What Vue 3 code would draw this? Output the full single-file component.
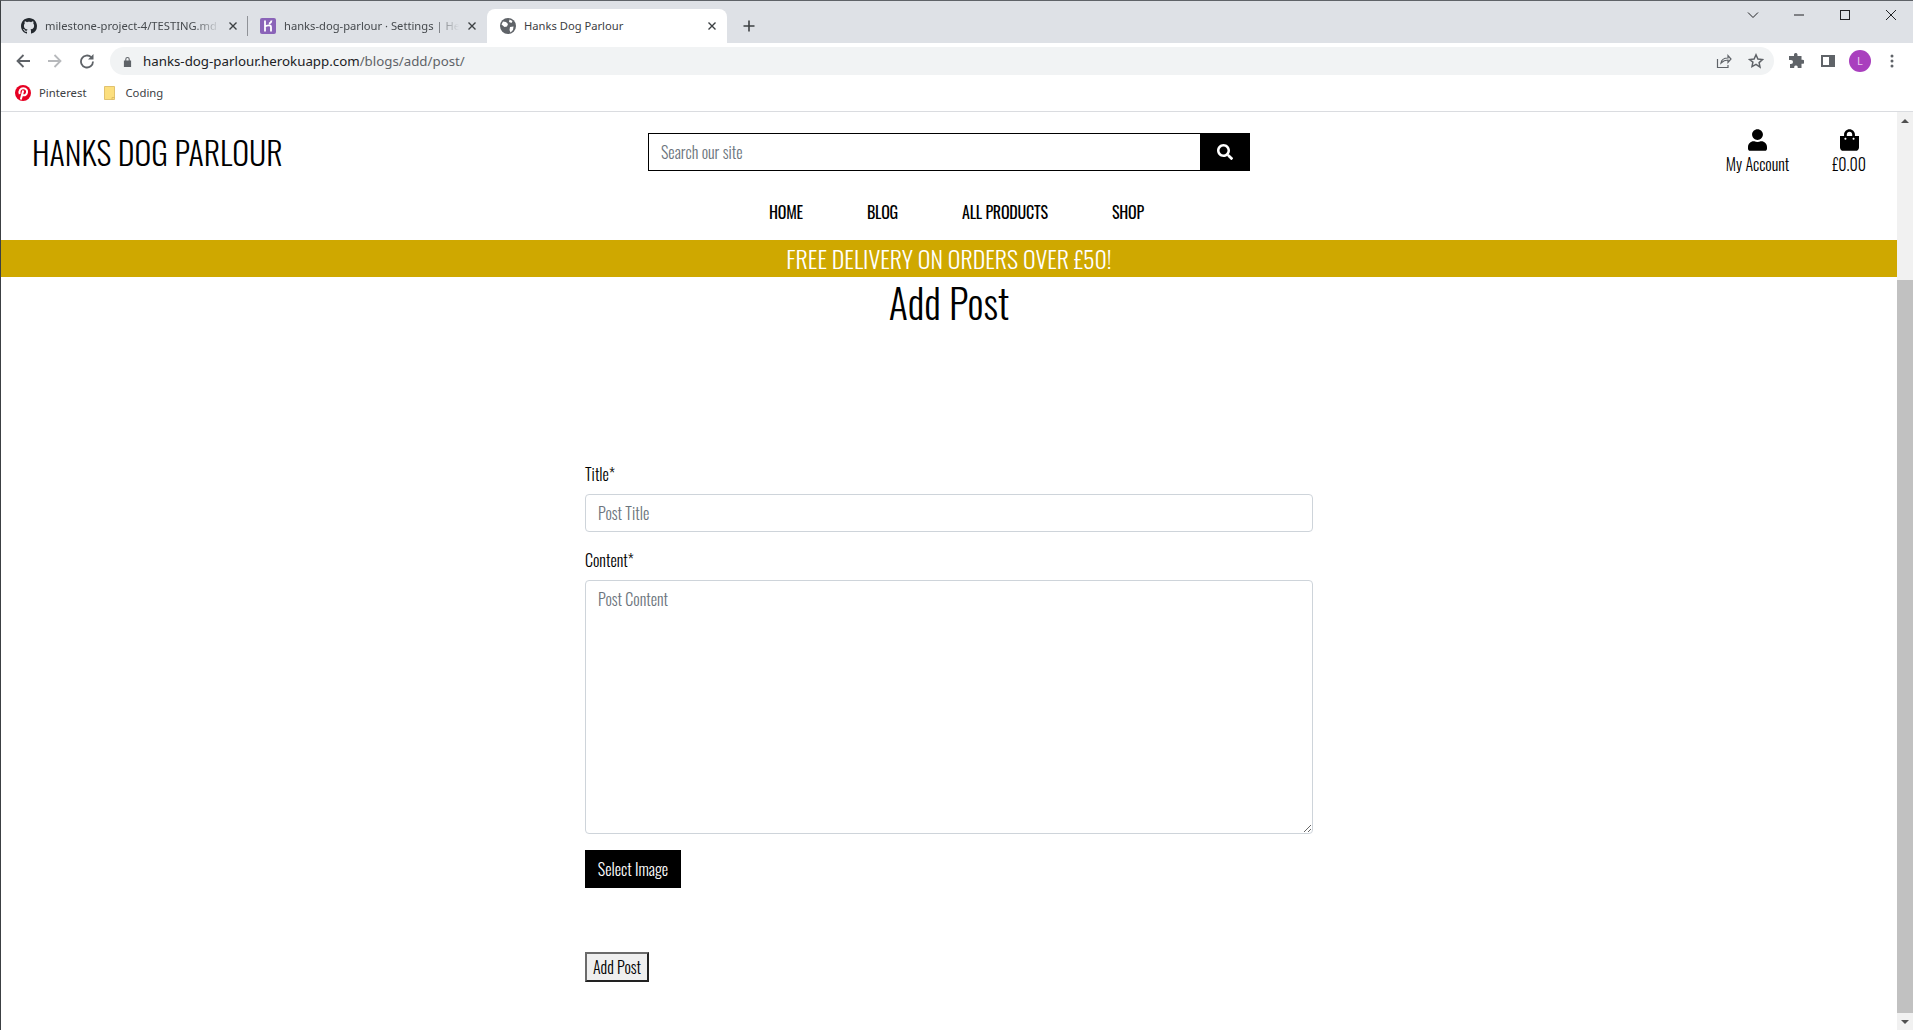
<script setup>
const navLinks = ["Home", "Blog", "All Products", "Shop"]
</script>

<template>
  <div class="window">
    <div class="tabstrip">
      <div class="tab">
        <svg class="favicon" viewBox="0 0 16 16"><path fill="#24292f" d="M8 0C3.58 0 0 3.58 0 8c0 3.54 2.29 6.53 5.47 7.59.4.07.55-.17.55-.38 0-.19-.01-.82-.01-1.49-2.01.37-2.53-.49-2.69-.94-.09-.23-.48-.94-.82-1.13-.28-.15-.68-.52-.01-.53.63-.01 1.08.58 1.23.82.72 1.21 1.87.87 2.33.66.07-.52.28-.87.51-1.07-1.78-.2-3.64-.89-3.64-3.95 0-.87.31-1.59.82-2.15-.08-.2-.36-1.02.08-2.12 0 0 .67-.21 2.2.82.64-.18 1.32-.27 2-.27.68 0 1.36.09 2 .27 1.53-1.04 2.2-.82 2.2-.82.44 1.1.16 1.92.08 2.12.51.56.82 1.27.82 2.15 0 3.07-1.87 3.75-3.65 3.95.29.25.54.73.54 1.48 0 1.07-.01 1.93-.01 2.2 0 .21.15.46.55.38A8.013 8.013 0 0016 8c0-4.42-3.58-8-8-8z"/></svg>
        <span class="tab-title fade">milestone-project-4/TESTING.md</span>
        <svg class="tab-close" viewBox="0 0 10 10"><path d="M1.5 1.5l7 7M8.5 1.5l-7 7"/></svg>
      </div>
      <div class="tab-sep"></div>
      <div class="tab">
        <svg class="favicon" viewBox="0 0 16 16"><rect width="16" height="16" rx="2" fill="#8a63b8"/><path fill="none" stroke="#fff" stroke-width="1.8" d="M5 2.500v11M5 8.500c1.500-1 6-2.200 6 .5v4.500M11.500 2.500c0 1.500-1 2.500-2.500 3.200"/></svg>
        <span class="tab-title fade">hanks-dog-parlour · Settings | Heroku</span>
        <svg class="tab-close" viewBox="0 0 10 10"><path d="M1.5 1.5l7 7M8.5 1.5l-7 7"/></svg>
      </div>
      <div class="tab active">
        <svg class="favicon" viewBox="0 0 16 16"><circle cx="8" cy="8" r="8" fill="#5f6368"/><path fill="#fff" d="M3 3.500l3 .5 2 2-1 2.500-2.500.5L1.500 6.500zM9.500 1.500l3 1.500-1 2-2.500-1zM10 9l3.500-.5L13 12l-2.500 2.500L9.500 12z"/></svg>
        <span class="tab-title">Hanks Dog Parlour</span>
        <svg class="tab-close" viewBox="0 0 10 10"><path d="M1.5 1.5l7 7M8.5 1.5l-7 7"/></svg>
      </div>
      <svg class="new-tab" viewBox="0 0 12 12"><path d="M6 .5v11M.5 6h11"/></svg>
      <div class="window-controls">
        <svg viewBox="0 0 12 12"><path d="M1 3.500l5 5 5-5"/></svg>
        <svg viewBox="0 0 12 12"><path d="M1 6h10"/></svg>
        <svg viewBox="0 0 12 12"><rect x="1.500" y="1.500" width="9" height="9"/></svg>
        <svg viewBox="0 0 12 12"><path d="M1 1l10 10M11 1L1 11"/></svg>
      </div>
    </div>

    <div class="toolbar">
      <svg class="tool" viewBox="0 0 16 16"><path d="M15 8H2.500M8.500 2L2.500 8l6 6"/></svg>
      <svg class="tool dim" viewBox="0 0 16 16"><path d="M1 8h12.500M7.500 2l6 6-6 6"/></svg>
      <svg class="tool" viewBox="0 0 16 16"><path d="M14 8.500a6 6 0 1 1-1.800-4.300"/><path class="fill" d="M14.500 1v5.500H9z"/></svg>
      <div class="omnibox">
        <svg class="lock" viewBox="0 0 10 12"><path fill="#5f6368" d="M1 5h8v7H1zM2.500 5V3.500a2.500 2.500 0 0 1 5 0V5H6.300V3.500a1.300 1.300 0 0 0-2.600 0V5z"/></svg>
        <span class="url"><span class="url-host">hanks-dog-parlour.herokuapp.com</span>/blogs/add/post/</span>
        <svg class="omni-icon share" viewBox="0 0 16 16"><path d="M1.500 6v8.500h10.500V12M5 10c.5-3.500 3-5 7-5V2.500L15 6l-3 3.500V7c-3 0-5 1-7 3z"/></svg>
        <svg class="omni-icon star" viewBox="0 0 16 16"><path d="M8 1.800l1.900 4.200 4.600.5-3.400 3.100.9 4.500L8 11.300l-4 2.300.9-4.500L1.500 6.500l4.600-.5z"/></svg>
      </div>
      <svg class="ext" viewBox="0 0 16 16"><path fill="#5f6368" d="M6 1.500a1.800 1.800 0 0 1 3.500 0V3h4v3.700h1a2 2 0 0 1 0 4h-1V15H9.700v-1.200a1.800 1.800 0 0 0-3.500 0V15H2v-4h1a2 2 0 0 0 0-4H1V3h5z"/></svg>
      <svg class="sidepanel" viewBox="0 0 14 12"><path fill="#5f6368" fill-rule="evenodd" d="M0 0h14v12H0zM2 2v8h6V2z"/></svg>
      <div class="avatar">L</div>
      <svg class="kebab" viewBox="0 0 4 14"><circle cx="2" cy="2" r="1.500"/><circle cx="2" cy="7" r="1.500"/><circle cx="2" cy="12" r="1.500"/></svg>
    </div>

    <div class="bookmarks">
      <svg class="bm-icon" viewBox="0 0 16 16"><circle cx="8" cy="8" r="8" fill="#e60023"/><path fill="none" stroke="#fff" stroke-width="2" d="M5.800 14.500l2.400-9M4.800 9C3.500 6 5.500 3.300 8.300 3.300c2.800 0 4.200 1.900 3.700 4.200-.4 2.200-2.200 3.200-3.900 2.500"/></svg>
      <span class="bm-label">Pinterest</span>
      <svg class="bm-folder" viewBox="0 0 11 14"><path fill="#fcdf7e" stroke="#d9b65a" stroke-width=".8" d="M.5.5h10v13H.5z"/><path fill="none" stroke="#d9b65a" stroke-width=".8" d="M8 13.500v-2h2.500"/></svg>
      <span class="bm-label">Coding</span>
    </div>

    <div class="viewport">
      <div class="page">
        <header class="site-header">
          <div class="logo">HANKS DOG PARLOUR</div>
          <form class="search" @submit.prevent>
            <input type="text" placeholder="Search our site" />
            <button type="submit" aria-label="Search">
              <svg viewBox="0 0 512 512"><path fill="#fff" d="M505 442.700L405.300 343c-4.500-4.500-10.600-7-17-7H372c27.600-35.300 44-79.700 44-128C416 93.100 322.900 0 208 0S0 93.100 0 208s93.100 208 208 208c48.300 0 92.700-16.400 128-44v16.300c0 6.400 2.500 12.500 7 17l99.700 99.700c9.400 9.400 24.600 9.400 33.900 0l28.300-28.300c9.400-9.400 9.400-24.600.1-34zM208 336c-70.700 0-128-57.200-128-128 0-70.700 57.200-128 128-128 70.700 0 128 57.200 128 128 0 70.700-57.200 128-128 128z"/></svg>
            </button>
          </form>
          <div class="header-links">
            <a class="header-link">
              <svg viewBox="0 0 448 512"><path d="M224 256c70.700 0 128-57.300 128-128S294.700 0 224 0 96 57.300 96 128s57.300 128 128 128zm89.600 32h-16.700c-22.200 10.200-46.900 16-72.900 16s-50.600-5.800-72.900-16h-16.700C60.200 288 0 348.200 0 422.400V464c0 26.500 21.500 48 48 48h352c26.500 0 48-21.500 48-48v-41.600c0-74.200-60.200-134.400-134.400-134.400z"/></svg>
              <span>My Account</span>
            </a>
            <a class="header-link">
              <svg viewBox="0 0 448 512"><path d="M352 160v-32C352 57.420 294.579 0 224 0 153.420 0 96 57.420 96 128v32H0v272c0 44.183 35.817 80 80 80h288c44.183 0 80-35.817 80-80V160h-96zm-192-32c0-35.290 28.710-64 64-64s64 28.710 64 64v32H160v-32zm160 120c-13.255 0-24-10.745-24-24s10.745-24 24-24 24 10.745 24 24-10.745 24-24 24zm-192 0c-13.255 0-24-10.745-24-24s10.745-24 24-24 24 10.745 24 24-10.745 24-24 24z"/></svg>
              <span>£0.00</span>
            </a>
          </div>
        </header>

        <nav class="main-nav">
          <a v-for="link in navLinks" :key="link">{{ link }}</a>
        </nav>

        <div class="banner">FREE DELIVERY ON ORDERS OVER £50!</div>

        <main class="content">
          <h1>Add Post</h1>
          <form class="post-form" @submit.prevent>
            <label for="title">Title*</label>
            <input id="title" type="text" placeholder="Post Title" />
            <label for="body">Content*</label>
            <textarea id="body" placeholder="Post Content"></textarea>
            <button type="button" class="select-image">Select Image</button>
            <button type="submit" class="add-post">Add Post</button>
          </form>
        </main>
      </div>

      <div class="scrollbar">
        <div class="arrow up"></div>
        <div class="track"><div class="thumb"></div></div>
        <div class="arrow down"></div>
      </div>
    </div>
  </div>
</template>

<style scoped>
.window {
  display: flex;
  flex-direction: column;
  height: 1030px;
  overflow: hidden;
  box-sizing: border-box;
  border-left: 1px solid #3c4043;
  border-top: 1px solid #5f6368;
  background: #fff;
  font-family: "Noto Sans", sans-serif;
}

/* browser chrome */
.tabstrip {
  display: flex;
  align-items: flex-end;
  height: 42px;
  flex-shrink: 0;
  background: #dee1e6;
  padding-left: 7px;
}
.tab {
  display: flex;
  align-items: center;
  width: 240px;
  height: 34px;
  box-sizing: border-box;
  padding: 0 6px 1px 13px;
  font-size: 11.2px;
  color: #45494d;
}
.tab.active {
  background: #fff;
  border-radius: 8px 8px 0 0;
  color: #3c4043;
}
.tab-sep {
  width: 1px;
  height: 20px;
  margin: 0 -1px 7px;
  background: #8f9297;
}
.favicon {
  width: 16px;
  height: 16px;
  flex-shrink: 0;
  margin-right: 8px;
}
.tab-title {
  flex: 1;
  min-width: 0;
  white-space: nowrap;
  overflow: hidden;
}
.fade {
  -webkit-mask-image: linear-gradient(90deg, #000 85%, transparent);
  mask-image: linear-gradient(90deg, #000 85%, transparent);
}
.tab-close {
  width: 10px;
  height: 10px;
  margin: 0 4px 0 8px;
  flex-shrink: 0;
  fill: none;
  stroke: #3c4043;
  stroke-width: 1.4;
}
.new-tab {
  width: 12px;
  height: 12px;
  margin: 0 0 11px 16px;
  fill: none;
  stroke: #3c4043;
  stroke-width: 1.6;
}
.window-controls {
  display: flex;
  align-items: center;
  gap: 34px;
  margin-left: auto;
  align-self: flex-start;
  padding: 8px 16px 0 0;
}
.window-controls svg {
  width: 12px;
  height: 12px;
  fill: none;
  stroke: #202124;
  stroke-width: 1;
}
.toolbar {
  display: flex;
  align-items: center;
  height: 36px;
  flex-shrink: 0;
  padding: 0 19px 0 14px;
}
.tool {
  width: 16px;
  height: 16px;
  margin-right: 16px;
  flex-shrink: 0;
  fill: none;
  stroke: #5f6368;
  stroke-width: 1.8;
}
.tool.dim {
  stroke: #b7b9bc;
}
.tool .fill {
  fill: #5f6368;
  stroke: none;
}
.omnibox {
  display: flex;
  align-items: center;
  flex: 1;
  height: 28px;
  margin: 0 14px 0 -1px;
  padding: 0 10px 0 13px;
  border-radius: 14px;
  background: #f1f3f4;
}
.lock {
  width: 9px;
  height: 11px;
  margin-right: 11px;
}
.url {
  font-size: 13.3px;
  color: #5f6368;
  white-space: nowrap;
}
.url-host {
  color: #202124;
}
.omni-icon {
  width: 16px;
  height: 16px;
  fill: none;
  stroke: #5f6368;
  stroke-width: 1.2;
}
.share {
  margin-left: auto;
  margin-right: 16px;
}
.star {
  stroke-width: 1.5;
}
.ext {
  width: 16px;
  height: 16px;
  margin-right: 17px;
}
.sidepanel {
  width: 14px;
  height: 12px;
  margin-right: 14px;
}
.avatar {
  width: 22px;
  height: 22px;
  margin-right: 19px;
  border-radius: 50%;
  background: #a93fbe;
  color: #eac8f0;
  font-size: 11px;
  line-height: 22px;
  text-align: center;
}
.kebab {
  width: 4px;
  height: 14px;
  fill: #5f6368;
}
.bookmarks {
  display: flex;
  align-items: center;
  height: 32px;
  flex-shrink: 0;
  box-sizing: border-box;
  padding: 0 0 5px 14px;
}
.bm-icon {
  width: 16px;
  height: 16px;
  margin-right: 8px;
}
.bm-label {
  font-size: 11.3px;
  color: #3c4043;
}
.bm-folder {
  width: 11px;
  height: 14px;
  margin: 0 10px 0 18px;
}

/* page */
.viewport {
  display: flex;
  flex: 1;
  min-height: 0;
  border-top: 1px solid #dadce0;
}
.page {
  flex: 1;
  min-width: 0;
  font-family: "Oswald", "Liberation Sans", sans-serif;
  font-weight: 300;
  color: #000;
}
.site-header {
  display: grid;
  grid-template-columns: 1fr 602px 1fr;
  align-items: start;
  height: 80px;
  padding: 21px 0 0;
  box-sizing: border-box;
}
.logo {
  padding-left: 31px;
  font-size: 32px;
  line-height: 38px;
}
.search {
  display: flex;
  height: 38px;
}
.search input {
  flex: 1;
  min-width: 0;
  box-sizing: border-box;
  border: 1px solid #000;
  border-right: 0;
  padding: 0 12px;
  outline: 0;
  font: inherit;
  font-size: 16px;
}
.search input::placeholder {
  color: #6c757d;
}
.search button {
  display: flex;
  align-items: center;
  justify-content: center;
  width: 50px;
  border: 0;
  padding: 0;
  background: #000;
}
.search svg {
  width: 16px;
  height: 16px;
}
.header-links {
  display: flex;
  justify-content: flex-end;
  gap: 43px;
  padding-right: 31px;
  margin-top: -4px;
}
.header-link {
  display: flex;
  flex-direction: column;
  align-items: center;
  font-size: 16px;
  line-height: 24px;
}
.header-link svg {
  width: 19px;
  height: 22px;
  margin-bottom: 1px;
}
.main-nav {
  display: flex;
  justify-content: center;
  gap: 64px;
  height: 48px;
  padding-left: 15px;
  line-height: 41px;
  font-size: 16px;
  font-weight: 400;
  letter-spacing: -0.2px;
  text-transform: uppercase;
  box-sizing: border-box;
}
.banner {
  height: 37px;
  background: #cfa800;
  color: #fff;
  font-size: 24px;
  line-height: 37px;
  text-align: center;
}
.content h1 {
  margin: 0;
  font-size: 40px;
  font-weight: 300;
  line-height: 50px;
  text-align: center;
}
.post-form {
  display: flex;
  flex-direction: column;
  align-items: flex-start;
  width: 728px;
  margin: 135px auto 0;
}
.post-form label {
  font-size: 16px;
  line-height: 24px;
  height: 24px;
  margin-bottom: 8px;
}
.post-form input,
.post-form textarea {
  width: 100%;
  box-sizing: border-box;
  border: 1px solid #ced4da;
  border-radius: 4px;
  padding: 6px 12px;
  outline: 0;
  font: inherit;
  font-size: 16px;
  line-height: 24px;
}
.post-form input {
  height: 38px;
  margin-bottom: 16px;
}
.post-form textarea {
  height: 254px;
  margin-bottom: 16px;
}
.post-form ::placeholder {
  color: #6c757d;
}
.select-image {
  height: 38px;
  width: 96px;
  border: 0;
  padding: 0;
  background: #000;
  color: #fff;
  font: inherit;
  font-size: 16px;
  white-space: nowrap;
}
.add-post {
  height: 30px;
  width: 64px;
  margin-top: 64px;
  padding: 0;
  border: 2px solid;
  border-color: #6b6b6b #222 #222 #6b6b6b;
  background: #efefef;
  color: #000;
  font: inherit;
  font-size: 16px;
  white-space: nowrap;
}
.scrollbar {
  display: flex;
  flex-direction: column;
  width: 16px;
  flex-shrink: 0;
  background: #f1f1f1;
}
.arrow {
  height: 17px;
  display: flex;
  align-items: center;
  justify-content: center;
}
.arrow::before {
  content: "";
  border-left: 4px solid transparent;
  border-right: 4px solid transparent;
}
.arrow.up::before {
  border-bottom: 4px solid #505050;
}
.arrow.down::before {
  border-top: 4px solid #505050;
}
.track {
  flex: 1;
  padding-top: 151px;
  box-sizing: border-box;
  min-height: 0;
}
.thumb {
  height: 100%;
  background: #c1c1c1;
}
</style>
